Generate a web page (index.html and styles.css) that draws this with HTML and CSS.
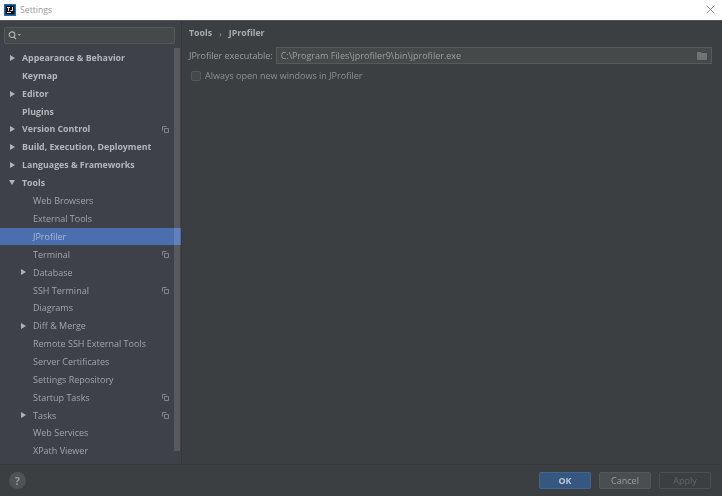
FILE: index.html
```html
<!DOCTYPE html>
<html lang="en">
<head>
<meta charset="utf-8">
<title>Settings</title>
<link rel="stylesheet" href="styles.css">
</head>
<body>
<div class="window">
  <header class="titlebar">
    <svg class="logo" viewBox="0 0 12 12" width="12" height="12"><rect width="12" height="12" fill="#1b6fb5"/><rect x="1.500" y="1.500" width="9" height="9" fill="#111"/><rect x="3" y="8" width="4" height="1" fill="#ddd"/><rect x="3" y="3" width="3" height="1" fill="#ddd"/><rect x="4" y="3" width="1" height="4" fill="#ddd"/><rect x="8" y="3" width="1" height="4" fill="#ddd"/><rect x="6.500" y="6" width="2" height="1" fill="#ddd"/></svg>
    <span class="title">Settings</span>
    <svg class="close" viewBox="0 0 9 9" width="9" height="9"><path d="M0.500 0.500L8.500 8.500M8.500 0.500L0.500 8.500" stroke="#8a8a8a" stroke-width="0.900" fill="none"/></svg>
  </header>
  <div class="main">
    <aside class="sidebar">
      <div class="search">
        <svg viewBox="0 0 14 9" width="14" height="9"><circle cx="4" cy="3.700" r="2.800" stroke="#b0b4b8" stroke-width="1.100" fill="none"/><path d="M6 5.800L8 8" stroke="#b0b4b8" stroke-width="1.200"/><path d="M9.500 3h3.500l-1.750 2z" fill="#a0a4a8"/></svg>
      </div>
      <div class="tree-wrap">
        <ul class="tree">
          <li class="row top"><i class="arrow"></i>Appearance &amp; Behavior</li>
          <li class="row top">Keymap</li>
          <li class="row top"><i class="arrow"></i>Editor</li>
          <li class="row top">Plugins</li>
          <li class="row top"><i class="arrow"></i>Version Control<svg class="copy" viewBox="0 0 7 7" width="7" height="7"><use href="#copy"/></svg></li>
          <li class="row top"><i class="arrow"></i>Build, Execution, Deployment</li>
          <li class="row top"><i class="arrow"></i>Languages &amp; Frameworks</li>
          <li class="row top"><i class="arrow open"></i>Tools</li>
          <li class="row sub">Web Browsers</li>
          <li class="row sub">External Tools</li>
          <li class="row sub selected">JProfiler</li>
          <li class="row sub">Terminal<svg class="copy" viewBox="0 0 7 7" width="7" height="7"><use href="#copy"/></svg></li>
          <li class="row sub"><i class="arrow"></i>Database</li>
          <li class="row sub">SSH Terminal<svg class="copy" viewBox="0 0 7 7" width="7" height="7"><use href="#copy"/></svg></li>
          <li class="row sub">Diagrams</li>
          <li class="row sub"><i class="arrow"></i>Diff &amp; Merge</li>
          <li class="row sub">Remote SSH External Tools</li>
          <li class="row sub">Server Certificates</li>
          <li class="row sub">Settings Repository</li>
          <li class="row sub">Startup Tasks<svg class="copy" viewBox="0 0 7 7" width="7" height="7"><use href="#copy"/></svg></li>
          <li class="row sub"><i class="arrow"></i>Tasks<svg class="copy" viewBox="0 0 7 7" width="7" height="7"><use href="#copy"/></svg></li>
          <li class="row sub">Web Services</li>
          <li class="row sub">XPath Viewer</li>
        </ul>
        <div class="scrollbar"></div>
      </div>
    </aside>
    <section class="content">
      <div class="crumbs"><b>Tools</b><span class="sep">›</span><b>JProfiler</b></div>
      <div class="field-row">
        <label class="field-label">JProfiler executable:</label>
        <div class="field"><span>C:\Program Files\jprofiler9\bin\jprofiler.exe</span>
          <svg viewBox="0 0 11 9" width="11" height="9"><path d="M0 1h4l1 1h5v7H0z" fill="#6e7476"/></svg>
        </div>
      </div>
      <div class="check-row"><span class="check"></span><span>Always open new windows in JProfiler</span></div>
    </section>
  </div>
  <footer class="footer">
    <span class="help">?</span>
    <div class="buttons">
      <button class="btn ok">OK</button>
      <button class="btn cancel">Cancel</button>
      <button class="btn apply">Apply</button>
    </div>
  </footer>
</div>
<svg class="defs" width="0" height="0"><symbol id="copy" viewBox="0 0 7 7"><path d="M0.500 4.500V0.500H4.500M2.500 2.500H6.500V6.500H2.500z" stroke="#7f8588" stroke-width="1" fill="none"/></symbol></svg>
</body>
</html>
```
FILE: styles.css
```css
* { box-sizing: border-box; }
html, body { margin: 0; padding: 0; }
body { width: 722px; height: 496px; overflow: hidden; font-family: "Open Sans", sans-serif; font-size: 9px; color: #a9adb0; background: #3c3f41; }
.window { width: 722px; height: 496px; display: flex; flex-direction: column; filter: blur(0.45px); }
.titlebar { height: 21px; flex: none; display: flex; align-items: center; background: #fff; border-bottom: 1px solid #55585a; padding: 0 6px 1px 4px; }
.logo { flex: none; }
.title { margin-left: 4px; color: #999; font-family: "Open Sans", sans-serif; font-size: 8.700px; }
.close { margin-left: auto; margin-right: 1px; }
.main { flex: 1; display: flex; min-height: 0; }
.sidebar { width: 181px; flex: none; background: #3e4148; display: flex; flex-direction: column; }
.search { height: 17px; margin: 6px 6px 0 4px; background: #45494a; border: 1px solid #55595a; border-radius: 2px; display: flex; align-items: center; padding-left: 3px; flex: none; }
.tree-wrap { position: relative; flex: 1; margin-top: 5px; }
.tree { list-style: none; margin: 0; padding: 0; }
.row { height: 17.860px; display: flex; align-items: center; position: relative; white-space: nowrap; }
.top { padding-left: 22px; font-weight: bold; font-size: 8.800px; color: #b4b8ba; }
.sub { padding-left: 33px; color: #a2a6a8; }
.selected { background: #4b6eaf; color: #a9b8d2; }
.arrow { position: absolute; width: 0; height: 0; border-left: 5px solid #b0b3b5; border-top: 3px solid transparent; border-bottom: 3px solid transparent; }
.top .arrow { left: 10px; }
.sub .arrow { left: 21px; }
.arrow.open { border-top: 5px solid #b0b3b5; border-left: 3px solid transparent; border-right: 3px solid transparent; border-bottom: 0; left: 9px; }
.copy { position: absolute; left: 162px; }
.scrollbar { position: absolute; right: 1px; top: -1px; width: 6px; height: 403px; background: rgba(255, 255, 255, 0.13); }
.content { flex: 1; padding: 5px 10px 0 7px; border-left: 1px solid #36393b; }
.crumbs { height: 14px; display: flex; align-items: center; color: #a9adb0; }
.crumbs b { font-weight: bold; font-size: 8.800px; }
.sep { margin: 0 7px; color: #8a8e90; }
.field-row { display: flex; align-items: center; margin-top: 7px; }
.field-label { color: #9a9ea0; margin-right: 3px; white-space: nowrap; }
.field { flex: 1; height: 17px; background: #45494a; border: 1px solid #565a5b; display: flex; align-items: center; justify-content: space-between; padding: 0 3px 0 4px; color: #9b9fa0; }
.check-row { display: flex; align-items: center; margin-top: 4px; height: 15px; color: #8e9294; padding-left: 2px; }
.check { width: 10px; height: 10px; border: 1px solid #55595b; border-radius: 2px; background: #45484a; margin-right: 4px; flex: none; }
.footer { height: 32px; flex: none; display: flex; align-items: center; justify-content: space-between; padding: 0 11px 0 9px; background: #3c3f41; border-top: 1px solid #36393b; }
.help { width: 17px; height: 17px; border-radius: 50%; background: #4f5355; color: #9a9ea0; display: flex; align-items: center; justify-content: center; font-size: 10px; font-weight: bold; }
.buttons { display: flex; gap: 8px; }
.btn { width: 52px; height: 17px; padding: 0; border-radius: 2px; font-family: "Open Sans", sans-serif; font-size: 9px; border: 1px solid #55585a; }
.ok { background: #365880; border-color: #3f6690; color: #bbc6d2; font-weight: bold; }
.cancel { background: #4b4e50; border-color: #555859; color: #9a9ea0; }
.apply { background: #3c3f41; border-color: #4c5052; color: #636668; }
.defs { position: absolute; }
```
